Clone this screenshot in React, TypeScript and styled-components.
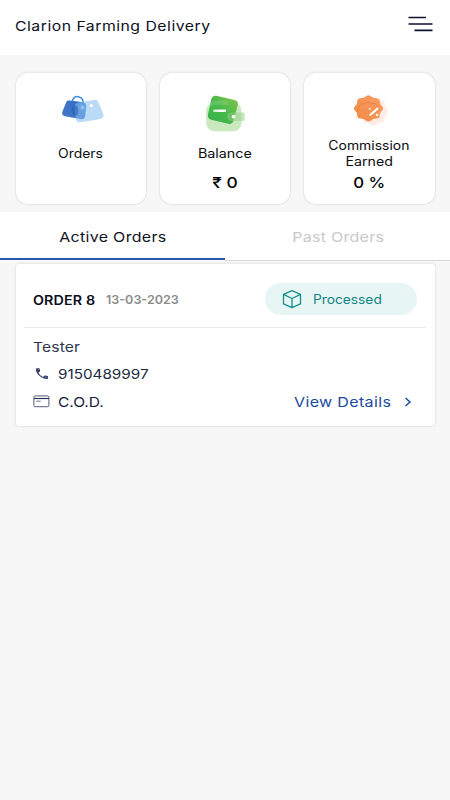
import React from "react";
import styled, { createGlobalStyle } from "styled-components";

const GlobalStyle = createGlobalStyle`
  * { box-sizing: border-box; }
  body { margin: 0; background: #f7f7f7; font-family: Inter, "Noto Sans", sans-serif; }
`;

const Page = styled.div`
  width: 100%;
  min-height: 800px;
  background: #f7f7f7;
`;

/* Wide-set text: the glyphs are stretched sideways around the given origin. */
const Wide = styled.span<{
  $size: number;
  $stretch?: number;
  $spacing?: number;
  $weight?: number;
  $color?: string;
  $center?: boolean;
}>`
  display: inline-block;
  white-space: nowrap;
  font-size: ${(p) => p.$size}px;
  font-weight: ${(p) => p.$weight ?? 400};
  letter-spacing: ${(p) => p.$spacing ?? 0}px;
  color: ${(p) => p.$color ?? "#0c0d10"};
  transform: scaleX(${(p) => p.$stretch ?? 1});
  transform-origin: ${(p) => (p.$center ? "center" : "left")};
`;

const Header = styled.header`
  display: flex;
  align-items: center;
  justify-content: space-between;
  height: 55px;
  padding: 0 17px 4px 15px;
  background: #fff;
`;

const MenuButton = styled.button`
  display: flex;
  padding: 0 0 2px;
  border: 0;
  background: none;
`;

const Stats = styled.section`
  display: grid;
  grid-template-columns: repeat(3, 1fr);
  gap: 13.5px;
  height: 157px;
  padding: 17.5px 15.5px 8px;
`;

const StatCard = styled.article`
  display: flex;
  flex-direction: column;
  align-items: center;
  border-radius: 12px;
  background: #fff;
  box-shadow: 0 0 2px rgba(0, 0, 0, 0.22);
`;

const StatIcon = styled.div<{ $shift?: number }>`
  height: 65px;
  padding-top: 21px;
  padding-left: ${(p) => p.$shift ?? 0}px;
  svg { display: block; }
`;

const StatLabel = styled.div`
  display: flex;
  flex-direction: column;
  align-items: center;
  justify-content: center;
  height: 32px;
  line-height: 15.5px;
`;

const StatValue = styled.div`
  margin-top: 2.5px;
  line-height: 20px;
`;

const Tabs = styled.nav`
  display: grid;
  grid-template-columns: 1fr 1fr;
  height: 49px;
  background: #fff;
`;

const Tab = styled.button<{ $active?: boolean }>`
  display: flex;
  align-items: center;
  justify-content: center;
  padding: ${(p) => (p.$active ? "3px 0 0" : "1px 0 0 2px")};
  border: 0;
  border-bottom: ${(p) => (p.$active ? "2px solid #2c55b0" : "1px solid #d9d9de")};
  margin-bottom: ${(p) => (p.$active ? "1px" : "0")};
  background: none;
  font-family: inherit;
`;

const OrderCard = styled.article`
  height: 162px;
  margin: 3px 15.5px 0;
  padding: 0 8.5px;
  border-radius: 3px;
  background: #fff;
  box-shadow: 0 0 3px rgba(0, 0, 0, 0.15);
`;

const OrderTop = styled.div`
  display: flex;
  align-items: center;
  height: 64px;
  padding: 7px 9.5px 0 9px;
  border-bottom: 1px solid #e9e9eb;
`;

const OrderNumber = styled.div`
  width: 72.5px;
`;

const StatusPill = styled.div`
  display: flex;
  align-items: center;
  gap: 11.5px;
  width: 152px;
  height: 32px;
  margin-left: auto;
  padding-left: 17px;
  border-radius: 16px;
  background: #e8f5f5;
`;

const Details = styled.div`
  padding: 5.5px 0 0 9px;
`;

const Line = styled.div`
  display: flex;
  align-items: center;
  height: 27.3px;
`;

const LineIcon = styled.span`
  display: flex;
  width: 25px;
`;

const DetailsLink = styled.a`
  display: flex;
  align-items: center;
  justify-content: space-between;
  width: 118px;
  margin-left: auto;
  margin-right: 14px;
`;

const BagIcon = () => (
  <svg width="44" height="34" viewBox="0 0 44 34">
    <defs>
      <linearGradient id="bag" x1="0" y1="1" x2="1" y2="0">
        <stop offset="0" stopColor="#4577c8" />
        <stop offset="1" stopColor="#2f6cc4" />
      </linearGradient>
      <radialGradient id="bagGlow">
        <stop offset="0" stopColor="#a9d4fa" />
        <stop offset="1" stopColor="#74aeea" stopOpacity="0" />
      </radialGradient>
    </defs>
    <path d="M11 10C11 3.500 15 1.700 18 3c3 .8 4.600 3.500 4 7" fill="none" stroke="#3d91df" strokeWidth="1.500" />
    <path d="M8.500 6.600 21 7.900c3 .5 4.500 2 4.200 5l-1 8.800c-.4 3-2 4-5 3.400L4 22.300C1.400 21.700.6 20 1.400 17.800L5 8.700c.7-1.700 1.800-2.300 3.500-2.100Z" fill="url(#bag)" />
    <path d="m20 8 13-2.100c2.300-.3 3.600.4 4.500 2.500l4.700 11.300c1 2.800 0 4.600-2.800 5.200L20 28.300c-3 .4-4.700-.6-5.200-3.500L13.600 14c-.3-3.200.4-5.200 6.400-6Z" fill="#8abff0" fillOpacity=".58" />
    <path d="M14 11c4 0 4.300 11 .7 10.900C9.500 21 9.500 13 14 11Z" fill="#285cb4" opacity=".55" />
    <circle cx="21.500" cy="13.500" r="4" fill="url(#bagGlow)" />
    <circle cx="30.300" cy="11.500" r="1.600" fill="#fff" />
  </svg>
);

const WalletIcon = () => (
  <svg width="40" height="40" viewBox="0 0 40 40">
    <defs>
      <linearGradient id="wallet" x1="0" y1="1" x2="1" y2="0">
        <stop offset="0" stopColor="#31b44b" />
        <stop offset=".5" stopColor="#49b94a" />
        <stop offset="1" stopColor="#8bc64d" />
      </linearGradient>
      <linearGradient id="bar">
        <stop offset="0" stopColor="#fff" stopOpacity=".7" />
        <stop offset=".7" stopColor="#fff" />
      </linearGradient>
    </defs>
    <rect x="1.200" y="9" width="35.300" height="28.200" rx="8" fill="#cbe9bf" />
    <path d="M11.500 1.800 29.500 6c2.900.7 3.900 2.300 3.300 5l-4.200 15.600c-.8 2.700-2.700 3.900-5.400 3.200L6.200 25.700c-2.700-.7-3.800-2.400-3.200-5.100L6.200 5.400c.7-2.900 2.400-4.200 5.300-3.600Z" fill="url(#wallet)" />
    <path d="M4.500 13c.5-6 3-6.500 7-6.500h6c4 0 5.500 1.200 6.800 4.600H12c-3.500 0-6 .8-7.500 1.900Z" fill="#fff" opacity=".13" />
    <path d="M26.700 18.500h11.500c1 0 1.500.5 1.500 1.500v5.500c0 1-.5 1.500-1.500 1.500H26.700c-6 0-6-8.500 0-8.500Z" fill="#91cf88" fillOpacity=".52" />
    <rect x="8" y="15.600" width="13.200" height="2.400" rx="1.200" fill="url(#bar)" />
    <circle cx="28.500" cy="22.700" r="1.800" fill="#fff" />
  </svg>
);

/* Eight-lobed seal outline, centred on the origin. */
const sealPath = (() => {
  const points = Array.from({ length: 81 }, (_, i) => {
    const angle = (i / 80) * Math.PI * 2;
    const radius = 13.4 + 0.9 * Math.cos(angle * 8);
    return `${(radius * Math.sin(angle)).toFixed(2)} ${(-radius * Math.cos(angle)).toFixed(2)}`;
  });
  return `M${points.join("L")}Z`;
})();

const DiscountIcon = () => (
  <svg width="38" height="34" viewBox="0 0 38 34">
    <defs>
      <linearGradient id="seal" x1="0" y1="1" x2="1" y2="0">
        <stop offset="0" stopColor="#f18a42" />
        <stop offset="1" stopColor="#fa9d66" />
      </linearGradient>
    </defs>
    <path d={sealPath} transform="translate(21.500 17.500)" fill="#feece5" />
    <path d={sealPath} transform="translate(16.500 14.400) scale(1.020 .92)" fill="url(#seal)" />
    <path d="M6.500 18c-1.800-2.500.3-3.500.6-5.300.3-2.500 2-3.300 4.600-3 2-.1 2.500-2 4.600-1.500 2 .4 2.600 1.700 4.800 1.300 2.500-.4 3.800.8 4 3" fill="none" stroke="#e97530" strokeWidth=".9" opacity=".6" />
    <path d="m18.500 20.700 6.800-6" stroke="#fff" strokeWidth="2.200" strokeLinecap="round" />
    <circle cx="17.800" cy="14.800" r="1.100" fill="#fee4d3" />
    <circle cx="25.200" cy="21" r="1.300" fill="#fff" />
  </svg>
);

const BoxIcon = () => (
  <svg width="20" height="20" viewBox="0 0 20 20" fill="none" stroke="#15908e" strokeWidth="1.300" strokeLinejoin="round">
    <path d="M10 1.700 18.500 5.300v9.600L10 18.700l-8.500-3.800V5.300L10 1.700ZM1.500 5.300 10 9.500l8.500-4.200M10 9.500v9.200" />
  </svg>
);

const PhoneIcon = () => (
  <svg width="18" height="14" viewBox="0 0 18 14">
    <path d="M3.700 1.300h2.200c.5 0 .8.300.9.800l.2 1.800c0 .4-.1.600-.4.800L5.400 5.700c1 1.800 2.600 3.200 4.700 4.200l1.400-1.100c.3-.2.500-.3.900-.2l2.100.4c.4.100.6.400.6.800v1.300c0 .6-.4.900-1 .9C8.400 11.700 3 7.100 2.900 2.200c0-.6.300-.9.800-.9Z" fill="#333b62" />
    <path d="M4.500 2.700h1.200M12.300 10.100l1.800.2" stroke="#a6a9bd" strokeWidth=".7" />
  </svg>
);

const CashCardIcon = () => (
  <svg width="17" height="13" viewBox="0 0 17 13" fill="none">
    <rect x=".9" y=".9" width="15" height="10.800" rx="1.300" stroke="#555c78" />
    <path d="M1 3.500h15" stroke="#27345d" strokeWidth="1.200" />
    <path d="M3.300 6.200h4.400" stroke="#5d6480" strokeWidth=".9" />
  </svg>
);

export default function App() {
  return (
    <Page>
      <GlobalStyle />
      <Header>
        <Wide $size={13.5} $stretch={1.17} $spacing={0.42} $color="#0b1025">
          Clarion Farming Delivery
        </Wide>
        <MenuButton aria-label="Menu">
          <svg width="25" height="17" viewBox="0 0 25 17" stroke="#0c1230" strokeWidth="1.700">
            <path d="M.5 1.500h17.500M.5 8h24M6.500 14.300h18" />
          </svg>
        </MenuButton>
      </Header>

      <Stats>
        <StatCard>
          <StatIcon $shift={5}><BagIcon /></StatIcon>
          <StatLabel>
            <Wide $center $size={12.7} $stretch={1.1}>Orders</Wide>
          </StatLabel>
        </StatCard>
        <StatCard>
          <StatIcon $shift={1}><WalletIcon /></StatIcon>
          <StatLabel>
            <Wide $center $size={12.7} $stretch={1.13}>Balance</Wide>
          </StatLabel>
          <StatValue>
            <Wide $center $size={15} $stretch={1.16} $weight={500} $color="#000">₹ 0</Wide>
          </StatValue>
        </StatCard>
        <StatCard>
          <StatIcon $shift={4}><DiscountIcon /></StatIcon>
          <StatLabel>
            <Wide $center $size={12.7} $stretch={1.1}>Commission</Wide>
            <Wide $center $size={12.7} $stretch={1.12}>Earned</Wide>
          </StatLabel>
          <StatValue>
            <Wide $center $size={15} $stretch={1.12} $weight={500} $color="#000">0 %</Wide>
          </StatValue>
        </StatCard>
      </Stats>

      <Tabs>
        <Tab $active>
          <Wide $center $size={13.7} $stretch={1.17} $spacing={0.25} $color="#10131d">Active Orders</Wide>
        </Tab>
        <Tab>
          <Wide $center $size={13.7} $stretch={1.17} $spacing={0.22} $color="#c9c9c9">Past Orders</Wide>
        </Tab>
      </Tabs>

      <OrderCard>
        <OrderTop>
          <OrderNumber>
            <Wide $size={12.5} $stretch={1.14} $spacing={0.15} $weight={600} $color="#0b0e1c">ORDER 8</Wide>
          </OrderNumber>
          <Wide $size={12.3} $stretch={1.02} $weight={600} $color="#8b8b8b">13-03-2023</Wide>
          <StatusPill>
            <BoxIcon />
            <Wide $size={12.5} $stretch={1.1} $color="#108583">Processed</Wide>
          </StatusPill>
        </OrderTop>
        <Details>
          <Line>
            <Wide $size={13.5} $stretch={1.16} $spacing={0.1} $color="#30364a">Tester</Wide>
          </Line>
          <Line>
            <LineIcon><PhoneIcon /></LineIcon>
            <Wide $size={13.5} $stretch={1.13} $color="#202940">9150489997</Wide>
          </Line>
          <Line>
            <LineIcon><CashCardIcon /></LineIcon>
            <Wide $size={13.5} $stretch={1.15} $color="#172039">C.O.D.</Wide>
            <DetailsLink>
              <Wide $size={13.7} $stretch={1.17} $spacing={0.3} $color="#1a4b9f">View Details</Wide>
              <svg width="8" height="10" viewBox="0 0 8 10" fill="none" stroke="#1a4b9f" strokeWidth="1.500">
                <path d="m1.500 1 4.500 4-4.500 4" />
              </svg>
            </DetailsLink>
          </Line>
        </Details>
      </OrderCard>
    </Page>
  );
}
